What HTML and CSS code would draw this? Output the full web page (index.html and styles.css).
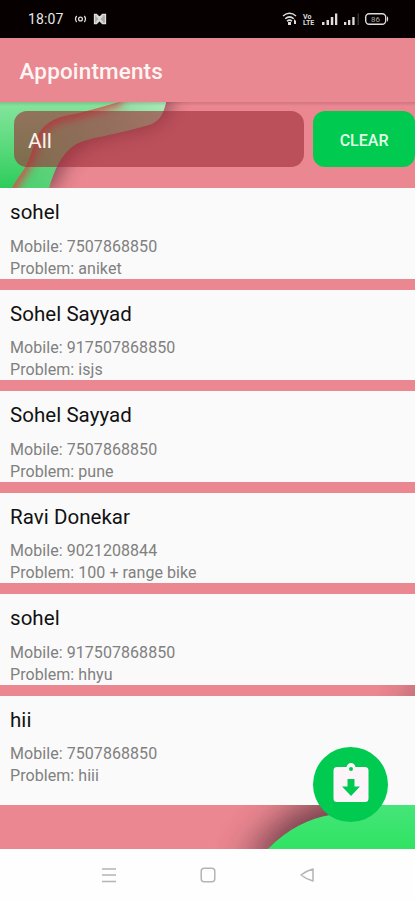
FILE: index.html
```html
<!DOCTYPE html>
<html lang="en">
<head>
<meta charset="utf-8">
<title>Appointments</title>
<link rel="stylesheet" href="styles.css">
</head>
<body>
<header class="status">
  <time class="clock">18:07</time>
  <svg class="alerts" width="35" height="14" viewBox="0 0 35 14" fill="none" stroke="#ddd" stroke-width="1.3">
    <circle cx="7.500" cy="7" r="1.900"/><path d="M3.700 4Q1.300 7 3.700 10M11.300 4Q13.700 7 11.300 10"/>
    <path d="M21.500 2.500v9h2l3-3 3 3h3v-9h-3l-3 3-3-3z" fill="#aaa"/><path d="M23.500 4l6 6M29.500 4l-6 6"/>
  </svg>
  <svg class="signals" width="107" height="16" viewBox="0 0 107 16">
    <g fill="none" stroke="#ddd" stroke-width="1.500"><path d="M1 5Q7.500-.3 14 5M3.200 7.700Q7.500 4 11.800 7.700M5 10.300Q7.500 8 10 10.300"/></g>
    <path d="M6 11h3v3H6zM12 8l2 2v3h-2z" fill="#ddd"/>
    <text class="tiny" x="21" y="7.500">Vo</text><text class="tiny" x="21" y="14">LTE</text>
    <path d="M40 11h2.500v3H40zM44.500 9H47v5h-2.500zM48.800 6h2.500v8h-2.500zM53 2.500h2.300V14H53zM62 11h2.300v3H62zM66 9h2.300v5H66zM70.300 6h2.300v8h-2.300z" fill="#ddd"/>
    <path d="M75.500 2.500H77V14h-1.500z" fill="#333"/>
    <rect x="83.700" y="2.700" width="20" height="10.600" rx="3.500" fill="none" stroke="#ddd" stroke-width="1.400"/>
    <path d="M105 5q2.500 3 0 6z" fill="#ddd"/><text class="level" x="89" y="11">86</text>
  </svg>
</header>
<div class="appbar"><h1>Appointments</h1></div>
<main class="screen">
  <svg class="backdrop" width="415" height="747" viewBox="0 102 415 747">
    <defs>
      <linearGradient id="leaf" x1="0" y1="102" x2="0" y2="188" gradientUnits="userSpaceOnUse"><stop offset="0" stop-color="#86e49d"/><stop offset=".5" stop-color="#5cda7d"/><stop offset="1" stop-color="#2dcc5b"/></linearGradient>
      <linearGradient id="ribbon" x1="166" y1="102" x2="40" y2="188" gradientUnits="userSpaceOnUse"><stop offset="0" stop-color="#a9ebb8"/><stop offset=".4" stop-color="#86d498"/><stop offset="1" stop-color="#52d173"/></linearGradient>
      <linearGradient id="fresh" x1="0" y1="805" x2="0" y2="849" gradientUnits="userSpaceOnUse"><stop offset="0" stop-color="#46e578"/><stop offset="1" stop-color="#2fe363"/></linearGradient>
      <filter id="soft" x="-30%" y="-30%" width="160%" height="160%"><feGaussianBlur stdDeviation="9"/></filter>
      <filter id="streak" x="-30%" y="-30%" width="160%" height="160%"><feGaussianBlur stdDeviation="4.500"/></filter>
      <filter id="wide" x="-30%" y="-60%" width="160%" height="220%"><feGaussianBlur stdDeviation="17"/></filter>
      <clipPath id="fold"><path d="M119 102H166C164 111 161 123 145 126C110 136 90 137 76 144C62 152 54 170 49 188H12C22 170 25 172 32 151C39 127 48 118 75 114C92 110 105 106 119 102z"/></clipPath>
    </defs>
    <path d="M0 92H174C170 119 163 126 135 132C90 141 66 148 56 190H0z" fill="#69303f" opacity=".65" filter="url(#soft)"/>
    <path d="M0 102H166C164 111 161 123 145 126C110 136 90 137 76 144C62 152 54 170 49 188H0z" fill="url(#leaf)"/>
    <g clip-path="url(#fold)">
      <path d="M0 102H170V190H0z" fill="url(#ribbon)"/>
      <path d="M8 194C20 170 24 172 31 151C38 126 47 117 75 113C92 109 105 105 121 99" fill="none" stroke="#d64b48" stroke-width="12" opacity=".9" filter="url(#streak)"/>
    </g>
    <path d="M240 868C275 822 300 800 335 798C375 780 405 755 430 650V868z" fill="#5c303e" opacity=".85" filter="url(#wide)"/>
    <path d="M267 850C287 829 310 818 330 815L345 805H415V850z" fill="url(#fresh)"/>
  </svg>
  <div class="filter">
    <div class="field">All</div>
    <button class="clear">CLEAR</button>
  </div>
  <section class="list">
    <article class="card"><h2>sohel</h2><p>Mobile: 7507868850</p><p>Problem: aniket</p></article>
    <article class="card"><h2>Sohel Sayyad</h2><p>Mobile: 917507868850</p><p>Problem: isjs</p></article>
    <article class="card"><h2>Sohel Sayyad</h2><p>Mobile: 7507868850</p><p>Problem: pune</p></article>
    <article class="card"><h2>Ravi Donekar</h2><p>Mobile: 9021208844</p><p>Problem: 100 + range bike</p></article>
    <article class="card"><h2>sohel</h2><p>Mobile: 917507868850</p><p>Problem: hhyu</p></article>
    <article class="card last"><h2>hii</h2><p>Mobile: 7507868850</p><p>Problem: hiii</p></article>
  </section>
  <button class="fab" aria-label="Download appointments">
    <svg width="36" height="40" viewBox="0 0 36 40"><path fill="#fdf4f9" fill-rule="evenodd" d="M4 4h9.500Q14.500 0 18 0T22.500 4H32q3.500 0 3.500 3.500v28Q35.500 39 32 39H4Q.5 39 .5 35.500v-28Q.5 4 4 4zM18 4a2 2 0 1 0 0 4a2 2 0 1 0 0-4zM14.500 16v7.500H9L18 33l9-9.500h-5.500V16z"/></svg>
  </button>
</main>
<nav class="nav">
  <svg width="16" height="16" viewBox="0 0 16 16"><path d="M1 2h14M1 8h14M1 14.500h14"/></svg>
  <svg width="16" height="16" viewBox="0 0 16 16"><rect x="1.200" y="1.200" width="13.600" height="13.600" rx="3"/></svg>
  <svg width="16" height="16" viewBox="0 0 16 16"><path d="M14 2v12q-7-2-12-6q5-4 12-6z"/></svg>
</nav>
</body>
</html>
```
FILE: styles.css
```css
* { box-sizing: border-box; margin: 0; }
body {
  width: 415px;
  height: 900px;
  display: flex;
  flex-direction: column;
  overflow: hidden;
  font-family: Roboto, sans-serif;
  background: #fefefe;
}
button { border: 0; padding: 0; font-family: inherit; }
.status {
  height: 37.5px;
  flex: none;
  display: flex;
  align-items: center;
  padding: 0 26px 0 28px;
  background: #060001;
  color: #e8e8e8;
}
.clock { width: 45px; font-size: 14px; letter-spacing: 0.1px; }
.signals { margin-left: auto; }
.tiny { font-size: 7px; font-weight: 700; fill: #ddd; }
.level { font-size: 8px; fill: #aaa; }
.appbar {
  height: 64.500px;
  flex: none;
  display: flex;
  align-items: center;
  padding: 2px 19.500px 0;
  background: #e98890;
}
.appbar h1 { font-size: 22.500px; font-weight: 500; letter-spacing: 0.14px; color: #fff6f4; }
.screen {
  position: relative;
  height: 747px;
  flex: none;
  overflow: hidden;
  background: #ea8790;
}
.screen::before {
  content: "";
  position: absolute;
  z-index: 1;
  inset: 0 0 auto;
  height: 4px;
  background: linear-gradient(rgba(100, 30, 45, 0.18), transparent);
}
.backdrop { position: absolute; inset: 0; }
.filter {
  position: relative;
  height: 86px;
  display: flex;
  gap: 9px;
  padding: 9px 0 0 14px;
}
.field {
  width: 290.500px;
  height: 56px;
  padding-left: 14px;
  line-height: 60px;
  font-size: 21px;
  color: #fff3ec;
  border-radius: 13px;
  background: rgba(158, 46, 57, 0.62);
}
.clear {
  width: 102px;
  height: 56px;
  padding-top: 2px;
  border-radius: 12px;
  background: #00ca50;
  color: #e2ffe9;
  font-size: 16px;
  font-weight: 500;
}
.list { position: relative; display: flex; flex-direction: column; gap: 11px; }
.card { height: 90.500px; padding: 11px 10px 0; background: #fafafa; }
.card.last { height: 109.500px; }
.card h2 {
  margin-bottom: 9.500px;
  font-size: 20.500px;
  line-height: 27px;
  font-weight: 400;
  letter-spacing: 0.05px;
  color: #111;
}
.card p { font-size: 16px; line-height: 22px; letter-spacing: 0.06px; color: #808080; }
.fab {
  position: absolute;
  left: 313px;
  top: 645px;
  width: 75px;
  height: 75px;
  display: grid;
  place-items: center;
  padding-bottom: 3px;
  border-radius: 50%;
  background: #00ca50;
}
.nav {
  flex: 1;
  display: flex;
  justify-content: center;
  align-items: center;
  gap: 83px;
}
.nav svg { fill: none; stroke: #b4b4b4; stroke-width: 1.500; stroke-linejoin: round; }
```
